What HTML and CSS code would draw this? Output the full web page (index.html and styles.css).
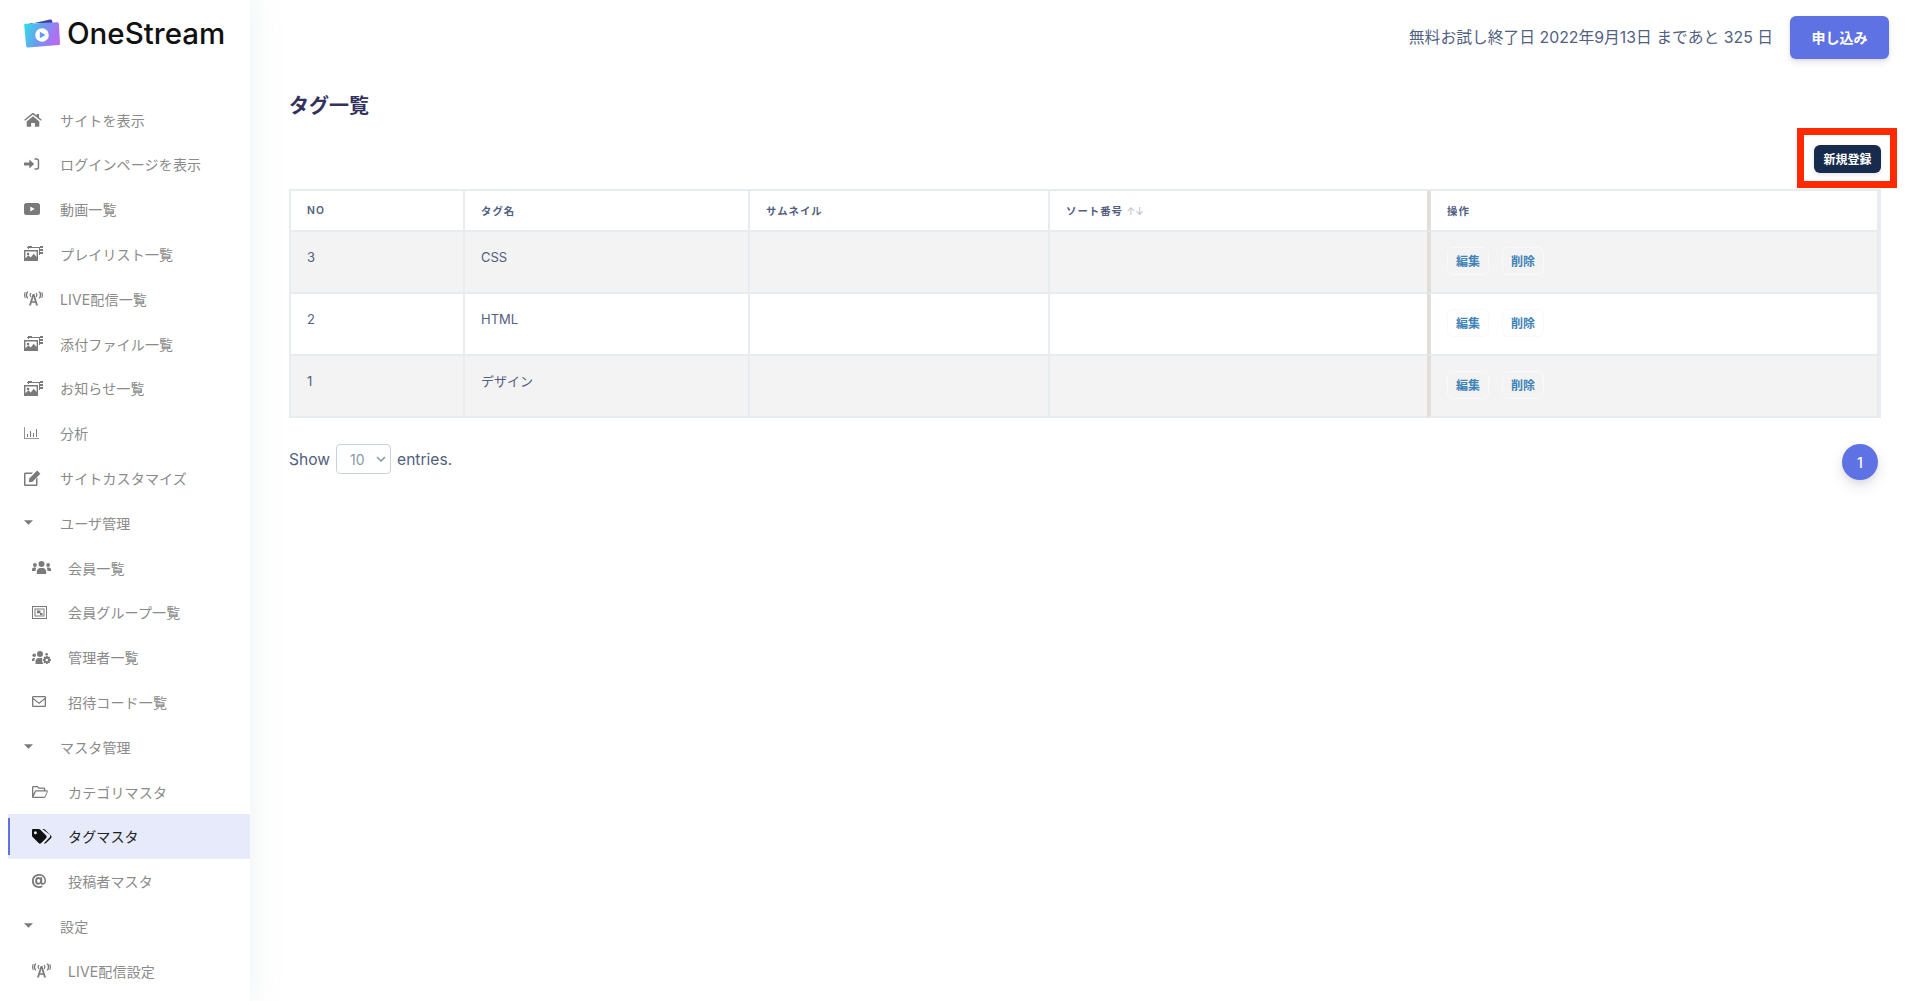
FILE: index.html
```html
<!DOCTYPE html>
<html lang="ja">
<head>
<meta charset="utf-8">
<title>タグ一覧 - OneStream</title>
<link rel="stylesheet" href="styles.css">
</head>
<body>
<svg class="defs" width="0" height="0" aria-hidden="true">
  <symbol id="i-home" viewBox="0 0 18 14"><path d="M9 3.2 2.7 8.4v4.9c0 .3.2.5.5.5h3.9V10h3.8v3.8h3.9c.3 0 .5-.2.5-.5V8.4L9 3.2Z"/><path d="M17.8 6.7 15 4.4V1h-2.3v1.500L9.900.3a1.400 1.400 0 0 0-1.800 0L.2 6.700l.8 1L9 1.500l8 6.200.8-1Z"/></symbol>
  <symbol id="i-login" viewBox="0 0 16 14"><path d="M.7 5.400h4.600V2.600L10.200 7l-4.900 4.400V8.600H.7c-.4 0-.7-.3-.7-.7V6.100c0-.4.3-.7.700-.7Z"/><path d="M10.500 1.200h2.300c1.300 0 2.400 1 2.400 2.300v7c0 1.300-1.100 2.300-2.400 2.300h-2.300v-1.500h2.300c.5 0 .9-.4.900-.8v-7c0-.4-.4-.8-.9-.8h-2.300V1.200Z"/></symbol>
  <symbol id="i-video" viewBox="0 0 16 12"><path fill-rule="evenodd" d="M2.500 0h11A2.500 2.500 0 0 1 16 2.500v7a2.500 2.500 0 0 1-2.500 2.500h-11A2.500 2.500 0 0 1 0 9.500v-7A2.500 2.500 0 0 1 2.500 0ZM6.300 3.400v5.200L10.700 6 6.300 3.400Z"/></symbol>
  <symbol id="i-media" viewBox="0 0 19 15"><path fill-rule="evenodd" d="M0 4h14v11H0V4Zm1.400 1.400v6.800l3-3 2.300 2.200 3-3.600 2.900 3.300V5.400H1.400Z"/><path d="M3 1h13v8h-1V2H3V1Z"/><path d="M4 3V0h4v1H5v2H4Zm12-3h3v2h-3V0Zm0 3h3v2h-3V3Zm0 3h3v2h-3V6Z"/><circle cx="4" cy="8" r="1.300"/></symbol>
  <symbol id="i-live" viewBox="0 0 19 14"><path d="M8.600 2.500h1.800L14 14h-1.900l-.8-2.800H7.700L6.900 14H5L8.600 2.500Zm-.4 7.200h2.600L9.500 5.300 8.200 9.700Z"/><path d="M3.100 0h1.500c-.9 1.100-1.400 2.200-1.400 3.500s.5 2.400 1.400 3.500H3.100C2.100 5.900 1.500 4.800 1.500 3.500S2.100 1.100 3.100 0ZM.8.500h1C1.200 1.400.9 2.400.9 3.500s.3 2.100.9 3h-1C.3 5.600 0 4.600 0 3.500S.3 1.400.8.500ZM14.400 0h1.500c1 1.100 1.600 2.200 1.600 3.500s-.6 2.400-1.600 3.500h-1.500c.9-1.100 1.400-2.200 1.400-3.500S15.300 1.100 14.400 0ZM17.200.500h1c.5.900.8 1.900.8 3s-.3 2.100-.8 3h-1c.6-.9.9-1.900.9-3s-.3-2.100-.9-3ZM6.300 1.500h1.200C7 2.100 6.800 2.700 6.800 3.500s.2 1.400.7 2H6.300c-.5-.6-.7-1.200-.7-2s.2-1.400.7-2ZM11.500 1.500h1.200c.5.600.7 1.200.7 2s-.2 1.400-.7 2h-1.200c.5-.6.7-1.200.7-2s-.2-1.400-.7-2Z"/></symbol>
  <symbol id="i-chart" viewBox="0 0 15 12"><path d="M0 0h.8v11.200H15v.8H0V0Z"/><path d="M3 7h1v3H3V7Zm3-3h1v6H6V4Zm3 2h1v4H9V6Zm3-4h1v8h-1V2Z"/></symbol>
  <symbol id="i-edit" viewBox="0 0 17 16"><path d="M1.500 2.500H9L7.500 4H1.500v10.500H12V9l1.500-1.500v7.200c0 .7-.6 1.300-1.300 1.300H1.300C.6 16 0 15.400 0 14.700V3.800c0-.7.600-1.300 1.500-1.300Z"/><path d="M13.200.6 16.400 3.800 8.500 11.700l-3.700.5.500-3.700L13.200.6Z"/></symbol>
  <symbol id="i-users" viewBox="0 0 19 13"><circle cx="9.500" cy="3" r="3"/><path d="M4.800 13v-2.200c0-2.200 1.700-3.800 3.400-3.800h2.600c1.700 0 3.400 1.600 3.400 3.800V13H4.800Z"/><circle cx="2.900" cy="4" r="1.900"/><circle cx="16.100" cy="4" r="1.900"/><path d="M0 10V8.500C0 7.300 1 6.500 2 6.500h1.500c.3 0 .6.100.8.200C3.800 7.700 3.500 8.700 3.500 10H0Zm19 0V8.500c0-1.200-1-2-2-2h-1.500c-.3 0-.6.100-.8.200.5 1 .8 2 .8 3.300H19Z"/></symbol>
  <symbol id="i-group" viewBox="0 0 15 13"><path fill-rule="evenodd" d="M0 0h15v13H0V0Zm1 1v11h13V1H1Zm1.500 1.500h10v8h-10v-8Zm1 1v6h8v-6h-8Z"/><path d="M5 4.500h3.500v2.800H5V4.500ZM8 7h2.500v2H8V7Z"/></symbol>
  <symbol id="i-admin" viewBox="0 0 19 13"><circle cx="8" cy="3" r="3"/><path d="M3.500 13v-2.200C3.500 8.600 5.100 7 6.800 7h2.400c.4 0 .7.100 1 .2-.4 1.800 0 4 1.300 5.800H3.500Z"/><circle cx="2.200" cy="4.300" r="1.800"/><path d="M0 10V8.800c0-1.100.9-1.900 1.800-1.900h1.400C2.600 7.700 2.300 8.800 2.300 10H0Z"/><path fill-rule="evenodd" d="M14 4.800h1.600l.3 1.300 1.200-.5 1 1-.6 1.200 1.500.4v1.500l-1.500.4.600 1.200-1 1-1.200-.6-.3 1.300H14l-.3-1.300-1.200.6-1-1 .6-1.200-1.300-.4V8.200l1.300-.4-.6-1.200 1-1 1.200.5.300-1.300Zm.8 2.900a1.300 1.300 0 1 0 0 2.600 1.300 1.300 0 0 0 0-2.600Z"/><circle cx="14.600" cy="3.300" r="1.300"/></symbol>
  <symbol id="i-mail" viewBox="0 0 14 11"><path fill-rule="evenodd" d="M1.300 0h11.400C13.400 0 14 .6 14 1.300v8.400c0 .7-.6 1.300-1.300 1.300H1.300C.6 11 0 10.400 0 9.700V1.300C0 .6.600 0 1.300 0Zm0 1.200v.9L7 6.400l5.700-4.300v-.9H1.300Zm11.400 2.400L7 7.900 1.300 3.600v6.200h11.400V3.600Z"/></symbol>
  <symbol id="i-folder" viewBox="0 0 16 12"><path fill-rule="evenodd" d="M1.300 0h4.300l1.600 1.600h4.700c.8 0 1.300.6 1.300 1.300v1.300h1.500c.9 0 1.400.9 1 1.700l-2.300 5.300c-.2.500-.7.800-1.200.8H1.300C.6 12 0 11.400 0 10.700V1.300C0 .6.600 0 1.300 0Zm0 1.200v6.900l1.500-3.100c.2-.5.700-.8 1.200-.8h7.800V3c0-.1-.1-.2-.2-.2H6.700L5.100 1.200H1.300Zm2.700 4.200-2.400 5.400h11l2.400-5.400H4Z"/></symbol>
  <symbol id="i-tags" viewBox="0 0 20 15"><path fill-rule="evenodd" d="M1.100 0h5.700c.5 0 1 .2 1.300.6l6 6c.7.7.7 1.900 0 2.600l-4.900 4.900c-.7.700-1.900.7-2.600 0l-6-6C.2 7.800 0 7.300 0 6.800V1.100C0 .5.500 0 1.100 0Zm2.300 2.200a1.500 1.500 0 1 0 0 3 1.500 1.500 0 0 0 0-3Z"/><path d="M10.300 0h1.300c.5 0 1 .2 1.300.6l6.100 6.200c.7.700.7 1.700 0 2.400l-5 4.900c-.6.600-1.500.6-2.100.1l5.700-5.700c.8-.9.800-2.200 0-3L10.300 0Z"/></symbol>
  <symbol id="i-at" viewBox="0 0 14 14"><path fill-rule="evenodd" d="M7 0c4 0 7 2.700 7 6.700 0 2.500-1.500 4.100-3.500 4.100-1 0-1.800-.5-2.100-1.300-.5.800-1.300 1.200-2.200 1.200-1.900 0-3.100-1.500-3.100-3.700 0-2.300 1.400-3.900 3.300-3.900.8 0 1.500.3 1.900 1V3.300h1.900v4.500c0 .9.300 1.300.9 1.300.8 0 1.400-.9 1.400-2.400 0-2.900-2.100-4.900-5.200-4.900C3.900 1.800 1.800 4 1.800 7s2 5.200 5.200 5.200c1.100 0 2.100-.2 3-.7l.6 1.500c-1 .6-2.300 1-3.700 1-4.100 0-7-2.900-7-7S2.900 0 7 0Zm-.4 5c-1 0-1.500.8-1.500 1.900s.6 1.900 1.500 1.900c1 0 1.500-.8 1.500-1.900S7.600 5 6.600 5Z"/></symbol>
  <symbol id="i-caret" viewBox="0 0 10 5"><path d="M0 0h10L5 5 0 0Z"/></symbol>
</svg>

<div class="app">
  <aside class="sidebar">
    <div class="brand">
      <svg class="brand-mark" viewBox="0 0 36 30" aria-hidden="true">
        <defs><linearGradient id="lg" x1="0" y1="0" x2="1" y2="0.3"><stop offset="0" stop-color="#2fe0e6"/><stop offset="0.55" stop-color="#6c9af0"/><stop offset="1" stop-color="#b56cf0"/></linearGradient></defs>
        <path d="M6 5 26 .6c1-.2 1.700.2 2 1l.6 2.400H6Z" fill="#3d3fa8"/>
        <path d="M1.500 4.800 33 3.200c1.100 0 1.800.6 1.900 1.600L36 24.300c.1 1-.5 1.700-1.500 1.800L4 28.600c-1 .1-1.700-.5-1.800-1.500L.2 6.300c-.1-.9.400-1.500 1.300-1.500Z" fill="url(#lg)"/>
        <circle cx="18" cy="16" r="6.800" fill="#fff"/>
        <path d="M15.800 12.800 21.600 16l-5.800 3.200Z" fill="#5f9cf0"/>
      </svg>
      <span class="brand-name">OneStream</span>
    </div>
    <nav class="nav">
      <a class="item"><svg class="ico ico-home"><use href="#i-home"/></svg>サイトを表示</a>
      <a class="item"><svg class="ico ico-login"><use href="#i-login"/></svg>ログインページを表示</a>
      <a class="item"><svg class="ico ico-video"><use href="#i-video"/></svg>動画一覧</a>
      <a class="item"><svg class="ico ico-media"><use href="#i-media"/></svg>プレイリスト一覧</a>
      <a class="item"><svg class="ico ico-media"><use href="#i-live"/></svg>LIVE配信一覧</a>
      <a class="item"><svg class="ico ico-media"><use href="#i-media"/></svg>添付ファイル一覧</a>
      <a class="item"><svg class="ico ico-media"><use href="#i-media"/></svg>お知らせ一覧</a>
      <a class="item"><svg class="ico ico-chart"><use href="#i-chart"/></svg>分析</a>
      <a class="item"><svg class="ico ico-edit"><use href="#i-edit"/></svg>サイトカスタマイズ</a>
      <a class="item"><svg class="ico ico-caret"><use href="#i-caret"/></svg>ユーザ管理</a>
      <a class="item sub"><svg class="ico ico-users"><use href="#i-users"/></svg>会員一覧</a>
      <a class="item sub"><svg class="ico ico-group"><use href="#i-group"/></svg>会員グループ一覧</a>
      <a class="item sub"><svg class="ico ico-users"><use href="#i-admin"/></svg>管理者一覧</a>
      <a class="item sub"><svg class="ico ico-mail"><use href="#i-mail"/></svg>招待コード一覧</a>
      <a class="item"><svg class="ico ico-caret"><use href="#i-caret"/></svg>マスタ管理</a>
      <a class="item sub"><svg class="ico ico-folder"><use href="#i-folder"/></svg>カテゴリマスタ</a>
      <a class="item sub active"><svg class="ico ico-tags"><use href="#i-tags"/></svg>タグマスタ</a>
      <a class="item sub"><svg class="ico ico-at"><use href="#i-at"/></svg>投稿者マスタ</a>
      <a class="item"><svg class="ico ico-caret"><use href="#i-caret"/></svg>設定</a>
      <a class="item sub"><svg class="ico ico-media"><use href="#i-live"/></svg>LIVE配信設定</a>
    </nav>
  </aside>

  <main class="main">
    <header class="topbar">
      <span class="trial">無料お試し終了日 2022年9月13日 まであと 325 日</span>
      <a class="btn-apply">申し込み</a>
    </header>
    <h1 class="title">タグ一覧</h1>
    <div class="actions">
      <a class="btn-new">新規登録</a>
      <span class="highlight"></span>
    </div>
    <table class="grid">
      <colgroup><col class="c1"><col class="c2"><col class="c3"><col class="c4"><col class="c5"></colgroup>
      <thead>
        <tr><th>NO</th><th>タグ名</th><th>サムネイル</th><th class="nr">ソート番号 <span class="sort">↑↓</span></th><th class="op">操作</th></tr>
      </thead>
      <tbody>
        <tr><td>3</td><td>CSS</td><td></td><td class="nr"></td><td class="op"><a class="btn-op">編集</a><a class="btn-op">削除</a></td></tr>
        <tr><td>2</td><td>HTML</td><td></td><td class="nr"></td><td class="op"><a class="btn-op">編集</a><a class="btn-op">削除</a></td></tr>
        <tr><td>1</td><td>デザイン</td><td></td><td class="nr"></td><td class="op"><a class="btn-op">編集</a><a class="btn-op">削除</a></td></tr>
      </tbody>
    </table>
    <div class="footer">
      <div class="show">Show <span class="select">10<svg class="chev" viewBox="0 0 10 6"><path d="M1 1l4 4 4-4" fill="none" stroke="#8a98a8" stroke-width="1.600"/></svg></span> entries.</div>
      <a class="page">1</a>
    </div>
  </main>
</div>
</body>
</html>
```

FILE: styles.css
```css
* { box-sizing: border-box; }
html, body { margin: 0; height: 100%; }
body {
  background: #fff;
  color: #525f7f;
  font-family: Inter, "Noto Sans CJK JP", sans-serif;
  font-size: 16px;
  overflow: hidden;
}
.defs { position: absolute; }
.app { display: flex; height: 1001px; overflow: hidden; }

.sidebar {
  flex: 0 0 250px;
  background: #fff;
  box-shadow: 0 0 32px 0 rgba(136, 152, 170, .15);
  position: relative;
}
.brand { display: flex; align-items: center; height: 67px; padding: 0 0 0 24px; margin-bottom: 30.2px; }
.brand-mark { width: 36px; height: 30px; margin-right: 7px; }
.brand-name { font-family: Inter, sans-serif; font-size: 29.500px; font-weight: 500; color: #111; line-height: 1; }

.nav { margin-left: 8px; }
.item {
  display: flex;
  align-items: center;
  height: 44.8px;
  padding-left: 16px;
  font-size: 14px;
  letter-spacing: .15px;
  color: #8a8a8a;
  position: relative;
}
.item.sub { padding-left: 24px; }
.ico { width: 36px; height: 16px; fill: #7a7a7a; flex: none; }
.ico-home { width: 18px; height: 14px; margin-right: 18px; }
.ico-login { width: 16px; height: 14px; margin-right: 20px; }
.ico-video { width: 16px; height: 12px; margin-right: 20px; }
.ico-media { width: 19px; height: 15px; margin-right: 17px; }
.ico-chart { width: 15px; height: 12px; margin-right: 21px; }
.ico-edit { width: 17px; height: 16px; margin-right: 19px; }
.ico-caret { width: 9px; height: 5px; margin-right: 27px; }
.ico-users { width: 19px; height: 13px; margin-right: 17px; }
.ico-group { width: 15px; height: 13px; margin-right: 21px; }
.ico-mail { width: 14px; height: 11px; margin-right: 22px; }
.ico-folder { width: 16px; height: 12px; margin-right: 20px; }
.ico-tags { width: 20px; height: 15px; margin-right: 16px; }
.ico-at { width: 14px; height: 14px; margin-right: 22px; }
.item.active { background: #e6eafa; color: #222; }
.item.active .ico { fill: #111; }
.item.active::before {
  content: "";
  position: absolute;
  left: 0;
  top: 4px;
  bottom: 4px;
  width: 2px;
  background: #5e72e4;
}

.main { flex: 1; min-width: 0; padding: 16px 31px 0 39px; }
.topbar { display: flex; justify-content: flex-end; align-items: center; }
.trial { font-size: 15.800px; margin-right: 17px; padding-bottom: 2px; }
.btn-apply {
  display: flex;
  align-items: center;
  justify-content: center;
  width: 99px;
  height: 43px;
  padding-bottom: 2px;
  background: #5e72e4;
  color: #fff;
  font-size: 14px;
  font-weight: 700;
  border-radius: 6px;
  box-shadow: 0 4px 6px rgba(50, 50, 93, .11), 0 1px 3px rgba(0, 0, 0, .08);
}
.title { margin: 31px 0 0; font-size: 20px; line-height: 32px; font-weight: 700; color: #32325d; }
.actions { display: flex; justify-content: flex-end; margin-top: 23px; padding-right: 8px; padding-bottom: 16px; position: relative; }
.btn-new {
  display: flex;
  align-items: center;
  justify-content: center;
  width: 67px;
  height: 28px;
  padding-bottom: 2px;
  background: #172b4d;
  color: #fff;
  font-size: 12px;
  font-weight: 700;
  border-radius: 6px;
  box-shadow: 0 2px 4px rgba(50, 50, 93, .12);
}
.highlight {
  position: absolute;
  right: -8px;
  top: -17px;
  width: 100px;
  height: 60px;
  border: 7px solid #ff2a00;
}

.grid {
  width: 1592px;
  table-layout: fixed;
  border-collapse: separate;
  border-spacing: 0;
  border-top: 2px solid #e9ecef;
  border-left: 2px solid #e9ecef;
}
.c1 { width: 174px; } .c2 { width: 285px; } .c3 { width: 300px; } .c4 { width: 377px; } .c5 { width: 454px; }
th, td {
  border-right: 2px solid #e9ecef;
  border-bottom: 2px solid #e9ecef;
  padding: 0 16px;
  text-align: left;
  font-size: 13px;
}
th {
  height: 41px;
  padding-bottom: 1px;
  font-size: 10.4px;
  font-weight: 600;
  letter-spacing: 1px;
  vertical-align: middle;
}
td { height: 62px; vertical-align: top; padding-top: 15px; line-height: 21px; }
tbody tr:nth-child(odd) td { background: #f3f3f3; }
.nr { border-right: 0; }
.op { border-left: 4px solid #e0dddb; border-right-width: 4px; }
td.op { vertical-align: middle; padding-top: 0; font-size: 0; }
.sort { color: #b6bccb; font-weight: 400; letter-spacing: 0; }
.btn-op {
  display: inline-flex;
  align-items: center;
  justify-content: center;
  width: 42px;
  height: 28px;
  margin-right: 13px;
  font-size: 12px;
  font-weight: 700;
  color: #3f82b5;
  border: 1px solid #f9f9f9;
  border-radius: 6px;
}

.footer { display: flex; justify-content: space-between; align-items: flex-start; margin-top: 26px; }
.show { display: flex; align-items: center; height: 30px; gap: 6px; font-size: 15.600px; }
.select {
  display: flex;
  align-items: center;
  width: 55px;
  height: 30px;
  padding-left: 13px;
  border: 1px solid #cad1d7;
  border-radius: 4px;
  color: #8898aa;
  font-size: 14px;
  position: relative;
}
.chev { position: absolute; right: 4px; top: 11px; width: 10px; height: 6px; }
.page {
  display: flex;
  align-items: center;
  justify-content: center;
  width: 36px;
  height: 36px;
  margin-right: 11px;
  border-radius: 50%;
  background: #5e72e4;
  color: #fff;
  font-size: 14px;
  font-weight: 500;
  box-shadow: 0 7px 14px rgba(50, 50, 93, .1), 0 3px 6px rgba(0, 0, 0, .08);
}
```
